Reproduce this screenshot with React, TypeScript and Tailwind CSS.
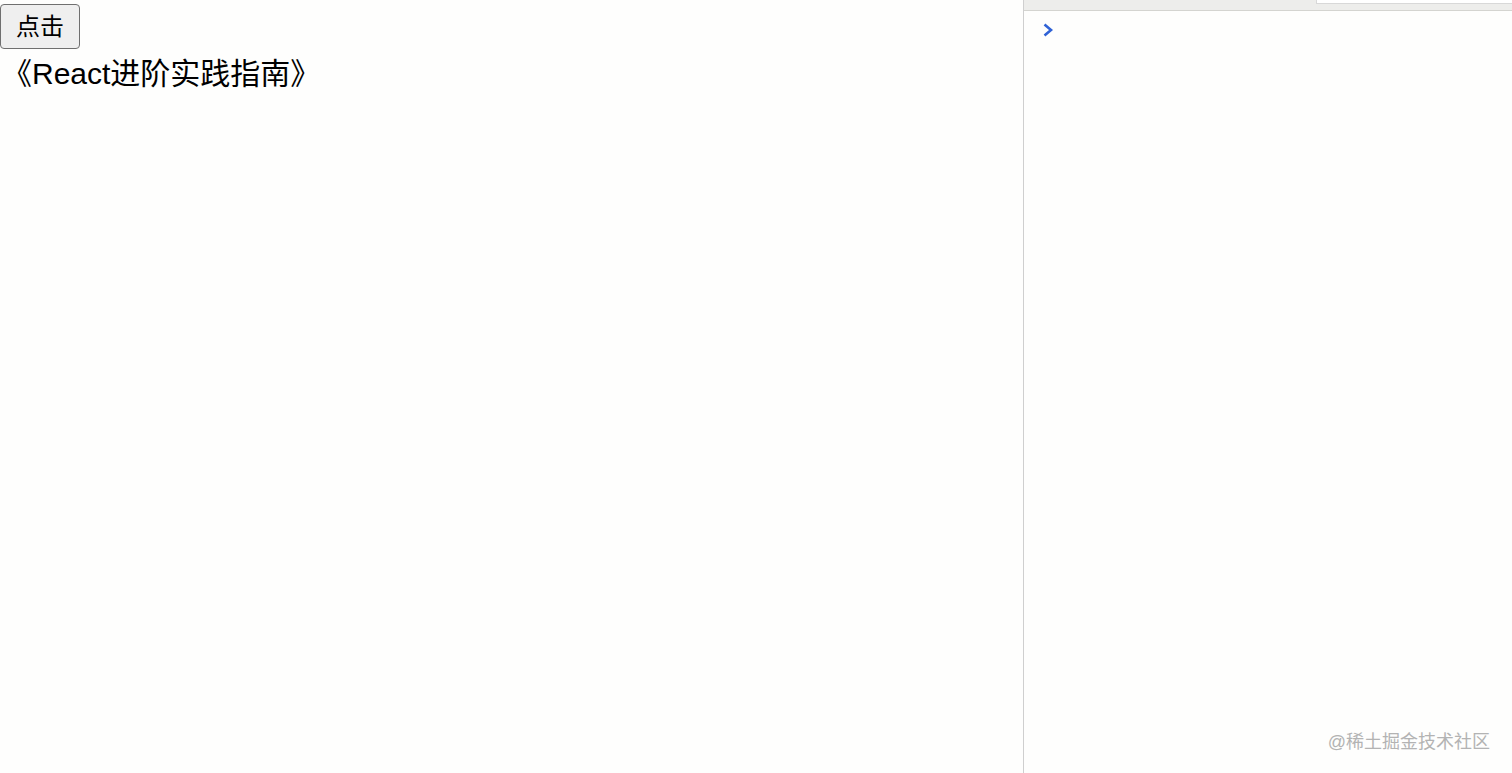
export default function App() {
  return (
    <div className="flex h-[773px] w-[1512px] overflow-hidden bg-[#fefefd] font-['Liberation_Sans','Noto_Sans_CJK_SC',sans-serif] text-black">
      <main className="w-[1023px] shrink-0 pt-[4px]">
        <button className="flex h-[45px] w-[80px] items-center justify-center rounded-[4px] border border-[#6f6f6f] bg-[#efefef] text-[24px] leading-none">
          点击
        </button>
        <p className="mt-[4px] pl-[2px] text-[30px] leading-[42px]">《React进阶实践指南》</p>
      </main>
      <aside className="relative flex flex-1 flex-col border-l border-[#cfcfcf]">
        <div className="flex h-[11px] border-b border-[#d4d4d0] bg-[#ededeb]">
          <div className="ml-auto h-[4px] w-[196px] border-b border-l border-[#d8d8d8] bg-white" />
        </div>
        <div className="flex-1 pl-[17px] pt-[10px]">
          <svg width="14" height="16" viewBox="0 0 14 16" className="mt-[1px]">
            <path d="M3.5 2.5 L10 8 L3.5 13.5" fill="none" stroke="#2f62d6" strokeWidth="2.6" />
          </svg>
        </div>
        <div className="absolute bottom-[17px] right-[22px] text-[18px] text-[#b3b3b3]">@稀土掘金技术社区</div>
      </aside>
    </div>
  );
}
